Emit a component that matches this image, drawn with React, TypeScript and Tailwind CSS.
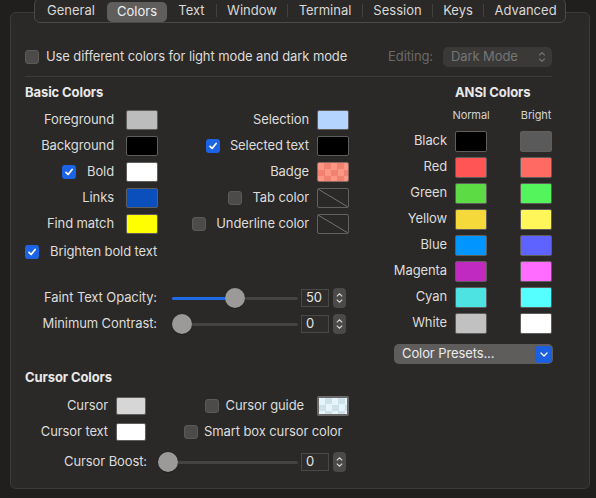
const Checkbox = ({ checked }: { checked?: boolean }) =>
    checked ? (
        <span className="flex h-[14px] w-[14px] shrink-0 items-center justify-center rounded-[3px] bg-[#1d63e6]">
            <svg width="10" height="10" viewBox="0 0 10 10">
                <path d="M2 5.3 L4.1 7.5 L8.1 2.5" fill="none" stroke="white" strokeWidth="1.7" strokeLinecap="round" strokeLinejoin="round" />
            </svg>
        </span>
    ) : (
        <span className="h-[14px] w-[14px] shrink-0 rounded-[3px] border border-[#5b5a59] bg-[#4c4b4a]" />
    );

const Swatch = ({ color, kind = 'solid', small }: { color?: string; kind?: 'solid' | 'none' | 'badge' | 'guide'; small?: boolean }) => {
    const size = small ? 'h-[18px] w-[30px]' : 'h-[20px] w-[32px]';
    if (kind === 'none')
        return (
            <span className={`${size} shrink-0 overflow-hidden rounded-[2px] border border-[#626160]`}>
                <svg width="100%" height="100%" viewBox="0 0 32 20" preserveAspectRatio="none">
                    <line x1="0" y1="0" x2="32" y2="20" stroke="#7a7978" strokeWidth="1" />
                </svg>
            </span>
        );
    if (kind === 'badge')
        return (
            <span className={`${size} shrink-0 rounded-[2px] border border-[#8a6a62] bg-[repeating-conic-gradient(#f0826f_0%_25%,#fb9783_0%_50%)] bg-[length:13px_13px]`} />
        );
    if (kind === 'guide')
        return (
            <span className="h-[20px] w-[32px] shrink-0 rounded-[2px] border-2 border-[#6b6a69] bg-[repeating-conic-gradient(#cfe1e8_0%_25%,#e6f5fb_0%_50%)] bg-[length:13px_13px]" />
        );
    return <span className={`${size} shrink-0 rounded-[2px] border border-[#5f5e5d] ${color}`} />;
};

const Stepper = () => (
    <span className="ml-[4px] flex h-[20px] w-[13px] flex-col items-center justify-center gap-[2px] rounded-[4px] bg-[#4b4a49]">
        <svg width="7" height="4" viewBox="0 0 7 4">
            <path d="M0.8 3.4 L3.5 0.8 L6.2 3.4" fill="none" stroke="#d8d8d8" strokeWidth="1.1" />
        </svg>
        <svg width="7" height="4" viewBox="0 0 7 4">
            <path d="M0.8 0.6 L3.5 3.2 L6.2 0.6" fill="none" stroke="#d8d8d8" strokeWidth="1.1" />
        </svg>
    </span>
);

const NumField = ({ value }: { value: string }) => (
    <span className="ml-[3px] flex h-[18px] w-[28px] items-center border border-[#4a4948] bg-[#2e2d2c] pl-[4px] text-[#e4e4e4]">{value}</span>
);

const Slider = ({ width, fill, knob }: { width: string; fill?: string; knob: string }) => (
    <div className={`relative flex h-[20px] items-center ${width}`}>
        <div className="h-[3px] w-full rounded-full bg-[#444342]" />
        {fill && <div className={`absolute left-0 top-[8.5px] h-[3px] rounded-full bg-[#1f6ae6] ${fill}`} />}
        <div className={`absolute top-0 h-[20px] w-[20px] rounded-full bg-[#9b9a99] shadow-[0_0.5px_1px_rgba(0,0,0,0.5)] ${knob}`} />
    </div>
);

const tabs = [
    { name: 'General', w: 'w-[72px]' },
    { name: 'Colors', w: 'w-[60px]', active: true },
    { name: 'Text', w: 'w-[49px]' },
    { name: 'Window', w: 'w-[70px]', sep: true },
    { name: 'Terminal', w: 'w-[74px]', sep: true },
    { name: 'Session', w: 'w-[69px]', sep: true },
    { name: 'Keys', w: 'w-[50px]', sep: true },
    { name: 'Advanced', w: 'w-[83px]', sep: true },
];

const basicLeft = [
    { label: 'Foreground', color: 'bg-[#bcbcbc]' },
    { label: 'Background', color: 'bg-black' },
    { label: 'Bold', color: 'bg-white', check: true },
    { label: 'Links', color: 'bg-[#0b4fbd]' },
    { label: 'Find match', color: 'bg-[#ffff00]' },
];

const basicRight: { label: string; color?: string; kind?: 'solid' | 'none' | 'badge'; check?: boolean; on?: boolean }[] = [
    { label: 'Selection', color: 'bg-[#b4d5ff]' },
    { label: 'Selected text', color: 'bg-black', check: true, on: true },
    { label: 'Badge', kind: 'badge' },
    { label: 'Tab color', kind: 'none', check: true },
    { label: 'Underline color', kind: 'none', check: true },
];

const ansi = [
    { name: 'Black', n: 'bg-black', b: 'bg-[#5a5a5a]' },
    { name: 'Red', n: 'bg-[#ff5555]', b: 'bg-[#ff6a62]' },
    { name: 'Green', n: 'bg-[#5cdb45]', b: 'bg-[#54f55c]' },
    { name: 'Yellow', n: 'bg-[#f5d93b]', b: 'bg-[#fff75a]' },
    { name: 'Blue', n: 'bg-[#0095ff]', b: 'bg-[#5e63ff]' },
    { name: 'Magenta', n: 'bg-[#c02ac0]', b: 'bg-[#ff6cff]' },
    { name: 'Cyan', n: 'bg-[#4ee3e3]', b: 'bg-[#55ffff]' },
    { name: 'White', n: 'bg-[#c1c1c1]', b: 'bg-white' },
];

export default function App() {
    return (
        <div className="h-[498px] w-[596px] overflow-hidden bg-[#201f1e] font-[Inter,'Liberation_Sans',sans-serif] text-[13px] text-[#dddcdb]">
            <div className="relative z-10 -mt-[2px] ml-[34px] flex h-[25px] w-[532px] items-center rounded-[6px] border border-[#4a4948] bg-[#2a2927]">
                {tabs.map((t) => (
                    <div key={t.name} className="flex items-center">
                        {t.sep && <span className="h-[13px] w-px bg-[#434241]" />}
                        <span
                            className={`flex h-[20px] items-center justify-center ${t.w} ${
                                t.active ? 'mt-[2px] rounded-[5px] bg-[#5f5e5d] text-[#f0f0f0]' : 'text-[#d9d8d7]'
                            }`}
                        >
                            {t.name}
                        </span>
                    </div>
                ))}
            </div>

            <div className="-mt-[11px] ml-[10px] h-[477px] w-[580px] rounded-[6px] border border-[#3c3b3a] bg-[#2a2927] pl-[14px] pt-[34px] tracking-[-0.1px]">
                <div className="flex h-[20px] w-[527px] items-center">
                    <Checkbox />
                    <span className="ml-[7px]">Use different colors for light mode and dark mode</span>
                    <span className="ml-auto text-[#6b6a69]">Editing:</span>
                    <span className="ml-[10px] flex h-[20px] w-[109px] items-center justify-between rounded-[5px] bg-[#3a3938] pl-[8px] pr-[6px] text-[#767574]">
                        Dark Mode
                        <svg width="8" height="12" viewBox="0 0 8 12">
                            <path d="M1.2 4.4 L4 1.6 L6.8 4.4 M1.2 7.6 L4 10.4 L6.8 7.6" fill="none" stroke="#777675" strokeWidth="1.2" />
                        </svg>
                    </span>
                </div>
                <div className="mt-[9px] h-px w-[527px] bg-[#3d3c3b]" />

                <div className="flex">
                    <div className="w-[365px] pt-[6px]">
                        <div className="flex h-[20px] items-center font-bold text-[#e8e8e8]">Basic Colors</div>
                        <div className="mt-[4px] flex">
                            <div className="w-[133px]">
                                {basicLeft.map((r) => (
                                    <div key={r.label} className="flex h-[26px] items-center">
                                        <span className="flex w-[89px] items-center justify-end gap-[11px] whitespace-nowrap">
                                            {r.check && <Checkbox checked />}
                                            {r.label}
                                        </span>
                                        <span className="ml-[12px] flex">
                                            <Swatch color={r.color} />
                                        </span>
                                    </div>
                                ))}
                            </div>
                            <div className="w-[191px]">
                                {basicRight.map((r) => (
                                    <div key={r.label} className="flex h-[26px] items-center">
                                        <span className="flex w-[151px] items-center justify-end gap-[10px] whitespace-nowrap">
                                            {r.check && <Checkbox checked={r.on} />}
                                            {r.label}
                                        </span>
                                        <span className="ml-[8px] flex">
                                            <Swatch color={r.color} kind={r.kind} />
                                        </span>
                                    </div>
                                ))}
                            </div>
                        </div>
                        <div className="mt-[2px] flex h-[26px] items-center gap-[11px]">
                            <Checkbox checked />
                            Brighten bold text
                        </div>

                        <div className="mt-[20px] flex h-[26px] items-center">
                            <span className="w-[132px] text-right">Faint Text Opacity:</span>
                            <span className="ml-[15px]">
                                <Slider width="w-[126px]" fill="w-[63px]" knob="left-[53px]" />
                            </span>
                            <NumField value="50" />
                            <Stepper />
                        </div>
                        <div className="flex h-[26px] items-center">
                            <span className="w-[132px] text-right">Minimum Contrast:</span>
                            <span className="ml-[15px]">
                                <Slider width="w-[126px]" knob="left-0" />
                            </span>
                            <NumField value="0" />
                            <Stepper />
                        </div>

                        <div className="mt-[31px] flex h-[20px] items-center font-bold text-[#e8e8e8]">Cursor Colors</div>
                        <div className="mt-[5px] flex h-[26px] items-center">
                            <span className="w-[83px] text-right">Cursor</span>
                            <span className="ml-[8px] flex">
                                <Swatch color="bg-[#d6d6d6]" small />
                            </span>
                            <span className="flex w-[158px] items-center justify-end gap-[7px] whitespace-nowrap">
                                <Checkbox />
                                Cursor guide
                            </span>
                            <span className="ml-[13px] flex">
                                <Swatch kind="guide" />
                            </span>
                        </div>
                        <div className="flex h-[26px] items-center">
                            <span className="w-[83px] text-right">Cursor text</span>
                            <span className="ml-[8px] flex">
                                <Swatch color="bg-white" small />
                            </span>
                            <span className="ml-[38px] flex items-center gap-[6px] whitespace-nowrap">
                                <Checkbox />
                                Smart box cursor color
                            </span>
                        </div>
                        <div className="mt-[4px] flex h-[26px] items-center">
                            <span className="w-[122px] text-right">Cursor Boost:</span>
                            <span className="ml-[11px]">
                                <Slider width="w-[140px]" knob="left-0" />
                            </span>
                            <NumField value="0" />
                            <Stepper />
                        </div>
                    </div>

                    <div className="w-[163px] pt-[6px]">
                        <div className="flex h-[20px] items-center pl-[65px] font-bold text-[#e8e8e8]">ANSI Colors</div>
                        <div className="mt-[5px] flex h-[14px] items-center text-[11px] text-[#d4d3d2]">
                            <span className="w-[65px]" />
                            <span className="flex w-[32px] justify-center whitespace-nowrap">Normal</span>
                            <span className="ml-[33px] flex w-[32px] justify-center whitespace-nowrap">Bright</span>
                        </div>
                        <div className="mt-[6px]">
                            {ansi.map((c) => (
                                <div key={c.name} className="flex h-[26px] items-center">
                                    <span className="w-[57px] text-right">{c.name}</span>
                                    <span className={`ml-[8px] h-[21px] w-[32px] rounded-[2px] border border-[#5f5e5d] ${c.n}`} />
                                    <span className={`ml-[33px] h-[21px] w-[32px] rounded-[2px] border border-[#5f5e5d] ${c.b}`} />
                                </div>
                            ))}
                        </div>
                        <div className="ml-[4px] mt-[8px] flex h-[20px] w-[159px] items-center justify-between rounded-[5px] bg-[#5e5d5c] pl-[8px] pr-[1px] text-[#ebebeb]">
                            Color Presets...
                            <span className="flex h-[17px] w-[17px] items-center justify-center rounded-[4px] bg-[#1c5fe0]">
                                <svg width="8" height="5" viewBox="0 0 8 5">
                                    <path d="M1 1 L4 4 L7 1" fill="none" stroke="white" strokeWidth="1.3" strokeLinecap="round" strokeLinejoin="round" />
                                </svg>
                            </span>
                        </div>
                    </div>
                </div>
            </div>
        </div>
    );
}
